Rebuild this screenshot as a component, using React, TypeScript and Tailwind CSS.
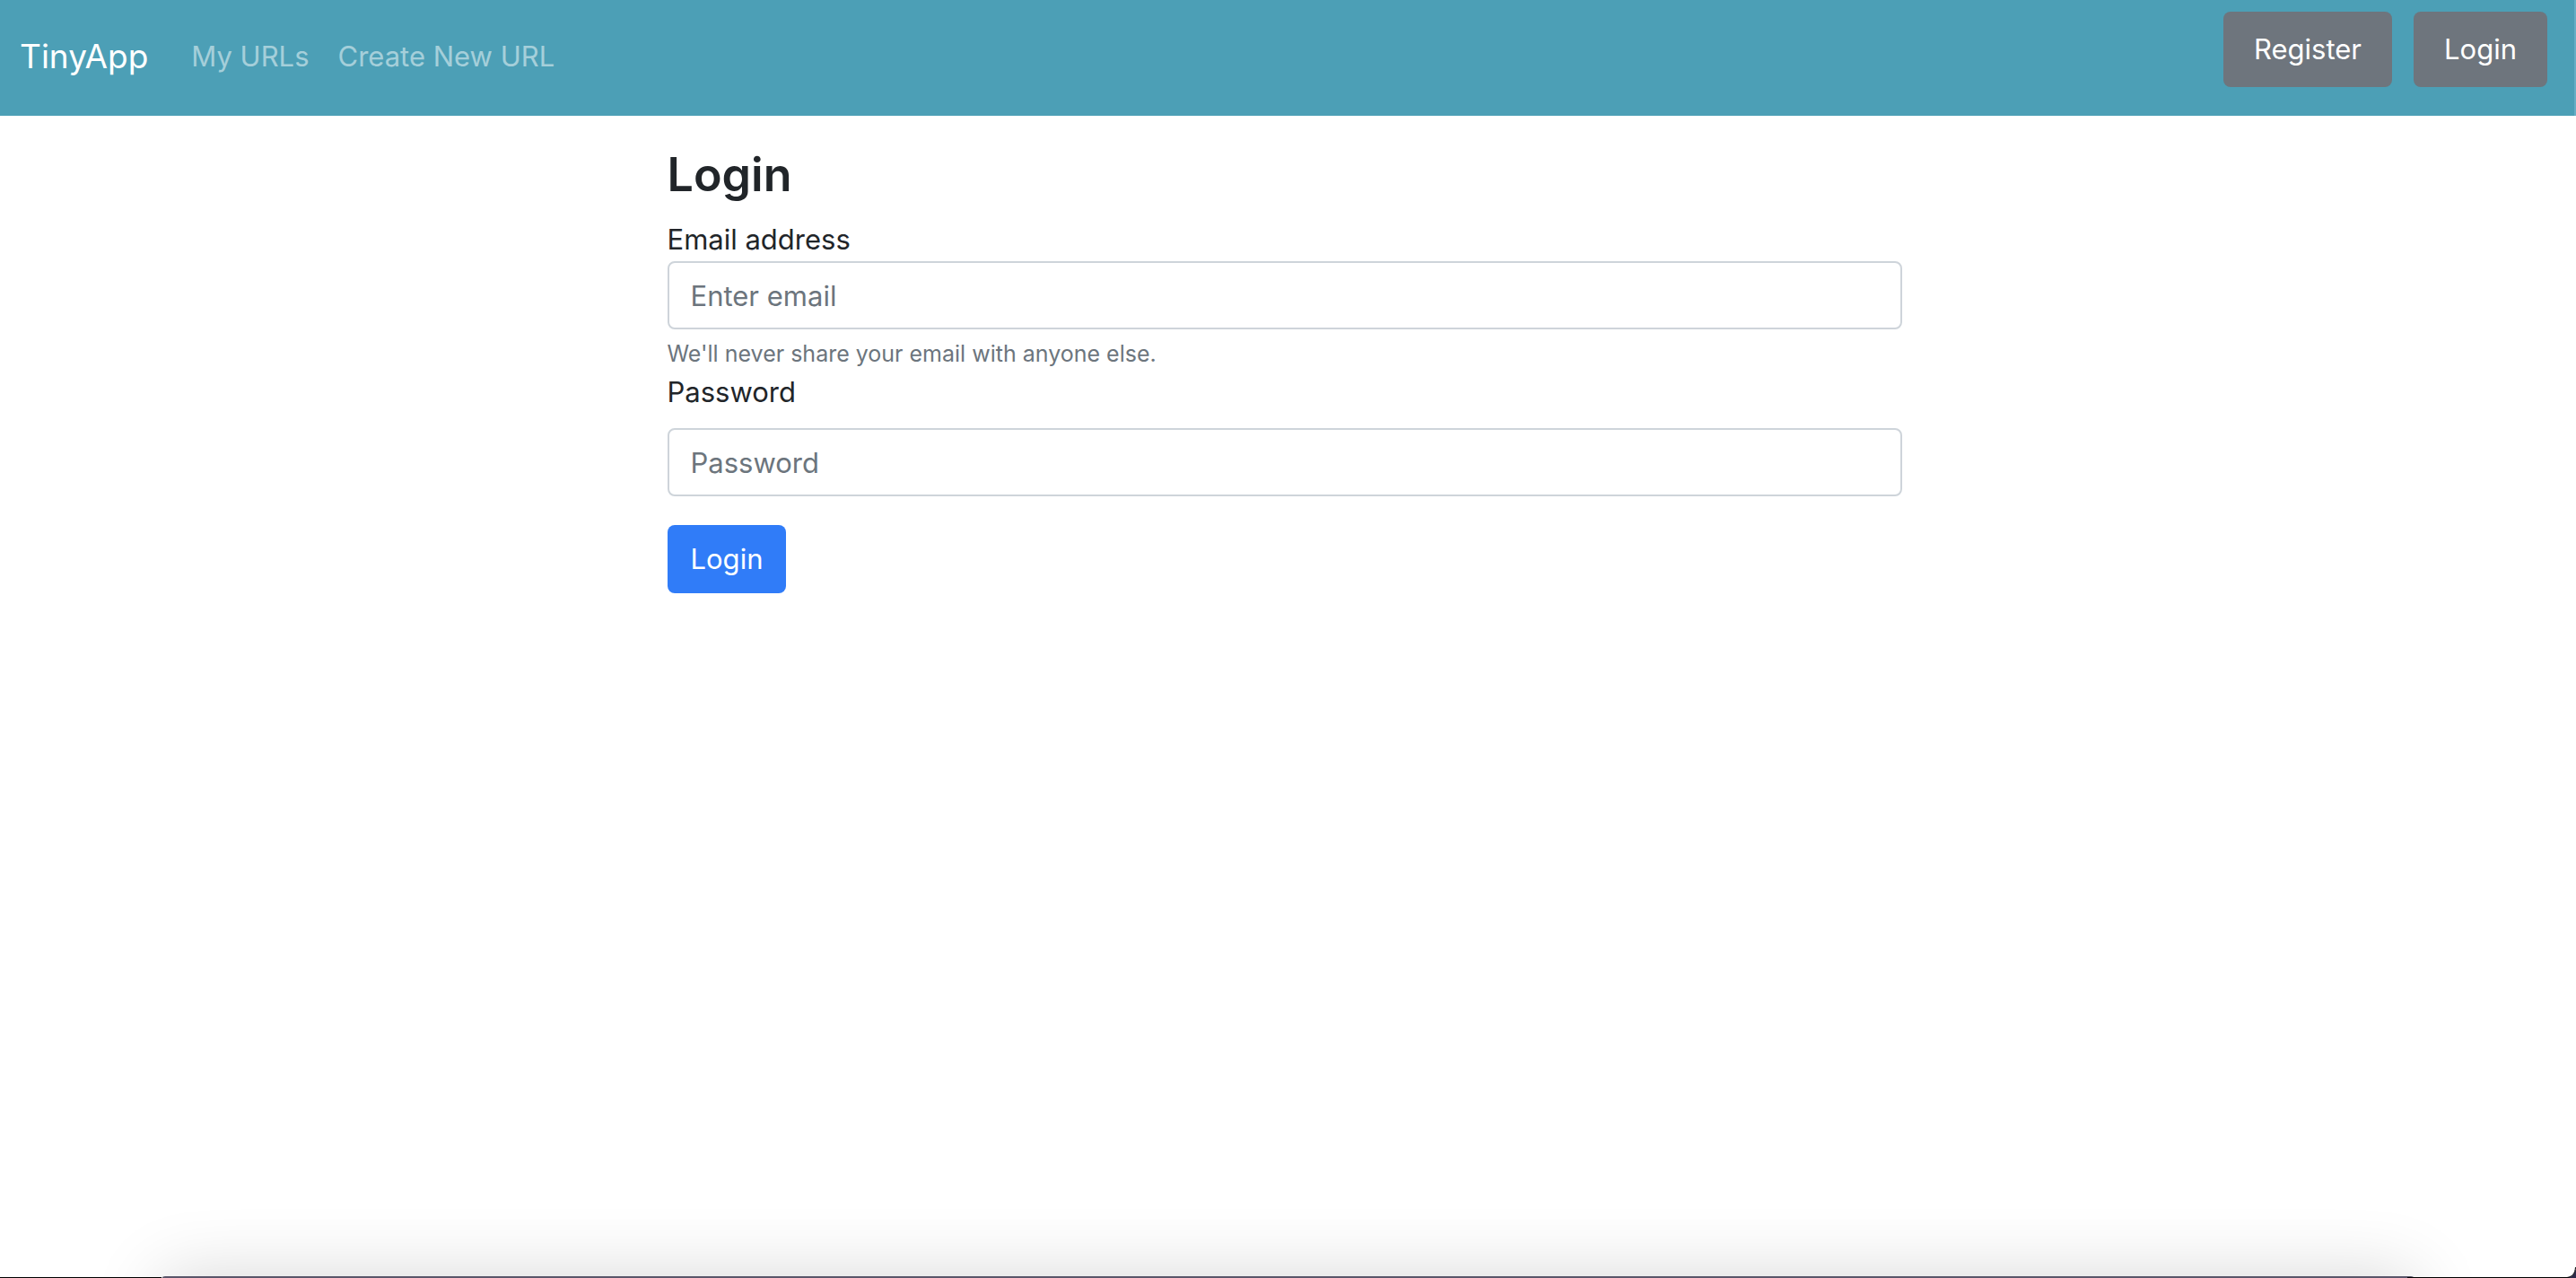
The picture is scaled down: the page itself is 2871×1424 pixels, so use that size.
const navLink = "text-[31px] leading-12 text-white/50 hover:text-white/75";
const navButton =
  "h-21 rounded-lg bg-[#6e757d] px-[34px] text-[31px] leading-12 text-white";
const field =
  "block h-19 w-full rounded-lg border-2 border-[#ced4da] bg-white px-6 text-[31px] leading-12 text-[#495057] placeholder:text-[#6c757d] placeholder:opacity-100";

function NavBar() {
  return (
    <nav className="flex h-[129px] items-center border-r-2 border-[#66aec5] bg-[#4c9fb6] pb-1 pl-[22px] pr-[30px]">
      <a href="#" className="mr-12 text-[37px] leading-15 text-white">
        TinyApp
      </a>
      <div className="flex grow gap-8">
        <a href="#urls" className={navLink}>
          My URLs
        </a>
        <a href="#new" className={navLink}>
          Create New URL
        </a>
      </div>
      <div className="flex gap-6 self-start pt-[13px]">
        <button type="button" className={navButton}>
          Register
        </button>
        <button type="button" className={navButton}>
          Login
        </button>
      </div>
    </nav>
  );
}

function LoginForm() {
  return (
    <form className="w-full max-w-[1376px]" onSubmit={(e) => e.preventDefault()}>
      <h1 className="mb-[14px] text-[52px] font-semibold leading-17">Login</h1>
      <label htmlFor="email" className="block text-[31px] leading-12">
        Email address
      </label>
      <input
        id="email"
        type="email"
        placeholder="Enter email"
        aria-describedby="email-help"
        className={field}
      />
      <p id="email-help" className="mt-2 text-[25px] leading-[38px] text-[#6c757d]">
        We'll never share your email with anyone else.
      </p>
      <label htmlFor="password" className="mb-4 block text-[31px] leading-12">
        Password
      </label>
      <input id="password" type="password" placeholder="Password" className={field} />
      <button
        type="submit"
        className="mt-8 h-19 rounded-lg bg-[#307cf8] px-[26px] text-[31px] leading-12 text-white"
      >
        Login
      </button>
    </form>
  );
}

function BottomEdge() {
  return (
    <div aria-hidden="true" className="relative h-32 overflow-hidden">
      <div className="absolute inset-x-[180px] top-[126px] h-24 rounded-t-sm bg-[#5a566a] shadow-[0_0_80px_rgba(0,0,0,0.16)]" />
      <div className="absolute bottom-0 left-0 h-px w-[180px] bg-black" />
      <div className="absolute bottom-0 right-0 h-px w-[188px] bg-black" />
      <svg className="absolute bottom-0 right-0" width="10" height="12" viewBox="0 0 10 12">
        <path d="M10 0V12H0C6 11 9 7 10 0Z" fill="#2e2a4a" />
        <path d="M0 11.5C6 10.5 9 7 9.5 0" fill="none" stroke="#000" />
      </svg>
    </div>
  );
}

export default function App() {
  return (
    <div className="flex min-h-screen flex-col bg-white font-['Inter',sans-serif] text-[#212529]">
      <NavBar />
      <main className="flex grow justify-center pl-2 pr-4 pt-8">
        <LoginForm />
      </main>
      <BottomEdge />
    </div>
  );
}
